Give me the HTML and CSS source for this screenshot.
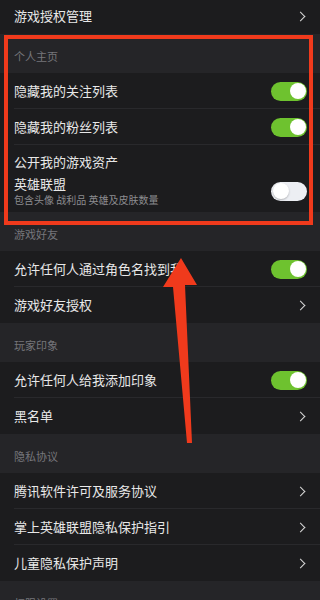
FILE: index.html
```html
<!DOCTYPE html>
<html lang="zh-CN">
<head>
    <meta charset="UTF-8">
    <meta name="viewport" content="width=device-width, initial-scale=1.0">
    <title>隐私设置</title>
    <link rel="stylesheet" href="styles.css">
</head>
<body>
    <div class="page">
        <!-- 游戏授权 -->
        <div class="row">
            <span class="label">游戏授权管理</span>
            <span class="chevron"></span>
        </div>

        <!-- 个人主页 -->
        <div class="section-title">个人主页</div>
        <div class="row line">
            <span class="label">隐藏我的关注列表</span>
            <span class="switch on"></span>
        </div>
        <div class="row line">
            <span class="label">隐藏我的粉丝列表</span>
            <span class="switch on"></span>
        </div>
        <div class="asset-block">
            <div class="label">公开我的游戏资产</div>
            <div class="asset-item">
                <div>
                    <div class="asset-name">英雄联盟</div>
                    <div class="asset-desc">包含头像 战利品 英雄及皮肤数量</div>
                </div>
                <span class="switch"></span>
            </div>
        </div>

        <!-- 游戏好友 -->
        <div class="section-title">游戏好友</div>
        <div class="row line">
            <span class="label">允许任何人通过角色名找到我</span>
            <span class="switch on"></span>
        </div>
        <div class="row">
            <span class="label">游戏好友授权</span>
            <span class="chevron"></span>
        </div>

        <!-- 玩家印象 -->
        <div class="section-title">玩家印象</div>
        <div class="row line">
            <span class="label">允许任何人给我添加印象</span>
            <span class="switch on"></span>
        </div>
        <div class="row">
            <span class="label">黑名单</span>
            <span class="chevron"></span>
        </div>

        <!-- 隐私协议 -->
        <div class="section-title">隐私协议</div>
        <div class="row line">
            <span class="label">腾讯软件许可及服务协议</span>
            <span class="chevron"></span>
        </div>
        <div class="row line">
            <span class="label">掌上英雄联盟隐私保护指引</span>
            <span class="chevron"></span>
        </div>
        <div class="row">
            <span class="label">儿童隐私保护声明</span>
            <span class="chevron"></span>
        </div>

        <div class="section-title">权限设置</div>

        <!-- 标注：红框和箭头 -->
        <div class="mark-box"></div>
        <svg class="mark-arrow" width="320" height="600" viewBox="0 0 320 600">
            <polygon points="181,258 197,285 185,285 192,443 187,443 173,287 163,287" fill="#f03a1c"/>
        </svg>
    </div>
</body>
</html>
```

FILE: styles.css
```css
/* 基础 */
html, body {
    margin: 0;
    padding: 0;
    background-color: #1c1c1e;
}

body {
    font-family: "Noto Sans CJK SC", "Noto Sans", sans-serif;
    color: #e8e8e8;
    overflow: hidden;
}

.page {
    position: relative;
    margin-top: -2px;
}

/* 列表行 */
.row {
    height: 36px;
    padding: 0 13px 0 14px;
    display: flex;
    align-items: center;
    justify-content: space-between;
    background-color: #1c1c1e;
    position: relative;
}

.row.line::after {
    content: "";
    position: absolute;
    left: 14px;
    right: 0;
    bottom: 0;
    height: 1px;
    background-color: #29292c;
}

.label {
    font-size: 13px;
    line-height: 20px;
    white-space: nowrap;
}

.section-title {
    height: 39px;
    box-sizing: border-box;
    padding: 14px 14px 0;
    font-size: 11px;
    line-height: 16px;
    color: #76767b;
    background-color: #252528;
}

/* 右箭头 */
.chevron {
    width: 6px;
    height: 6px;
    border-top: 1.6px solid #d8d8d8;
    border-right: 1.6px solid #d8d8d8;
    transform: rotate(45deg);
    margin-right: 3px;
}

/* 开关 */
.switch {
    width: 36px;
    height: 19px;
    border-radius: 10px;
    background-color: #eceef3;
    position: relative;
    flex-shrink: 0;
}

.switch::after {
    content: "";
    position: absolute;
    top: 1.5px;
    left: 1.5px;
    width: 16px;
    height: 16px;
    border-radius: 50%;
    background-color: #fff;
    box-shadow: 0 1px 2px rgba(0, 0, 0, 0.25);
}

.switch.on {
    background-color: #6ec22f;
}

.switch.on::after {
    left: auto;
    right: 1.5px;
    box-shadow: none;
}

/* 游戏资产 */
.asset-block {
    padding: 7px 13px 6px 14px;
    background-color: #1c1c1e;
}

.asset-item {
    margin-top: 4px;
    display: flex;
    align-items: center;
    justify-content: space-between;
}

.asset-name {
    font-size: 13px;
    line-height: 16px;
}

.asset-desc {
    margin-top: 1px;
    font-size: 10px;
    line-height: 13px;
    color: #8c8c90;
    white-space: nowrap;
}

/* 标注 */
.mark-box {
    position: absolute;
    left: 4px;
    top: 37px;
    width: 309px;
    height: 190px;
    box-sizing: border-box;
    border: 4px solid #f03a1c;
}

.mark-arrow {
    position: absolute;
    left: 0;
    top: 2px;
}
```
